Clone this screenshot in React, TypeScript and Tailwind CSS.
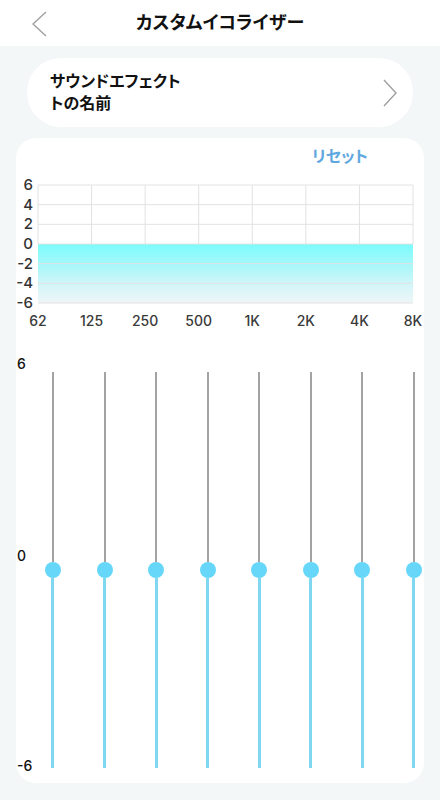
import React from "react";

const bands = ["62", "125", "250", "500", "1K", "2K", "4K", "8K"];
const levels = ["6", "4", "2", "0", "-2", "-4", "-6"];

const jp = "[font-family:'Liberation_Sans','Noto_Sans_CJK_JP',sans-serif] [font-feature-settings:'palt']";
const num = "[font-family:Inter,'Liberation_Sans',sans-serif]";

function EqChart() {
  const w = 375;
  const h = 118;
  const colW = w / 7;
  const rowH = h / 6;
  return (
    <svg width={w} height={h} viewBox={`0 0 ${w} ${h}`} className="block overflow-visible">
      <defs>
        <linearGradient id="eqFill" x1="0" y1="0" x2="0" y2="1">
          <stop offset="0%" stopColor="#7cfbfc" />
          <stop offset="30%" stopColor="#9ff8fa" />
          <stop offset="70%" stopColor="#d4f5f8" />
          <stop offset="100%" stopColor="#eef6f8" />
        </linearGradient>
      </defs>
      <rect x={0} y={h / 2} width={w} height={h / 2} fill="url(#eqFill)" />
      {Array.from({ length: 7 }).map((_, i) => (
        <line key={`h_${i}`} x1={0} x2={w} y1={i * rowH} y2={i * rowH} stroke="#e2e2e2" strokeWidth={1} />
      ))}
      {Array.from({ length: 8 }).map((_, i) => (
        <line key={`v_${i}`} x1={i * colW} x2={i * colW} y1={0} y2={h / 2} stroke="#e2e2e2" strokeWidth={1} />
      ))}
    </svg>
  );
}

function BandSlider() {
  return (
    <div className="w-[51.57px] flex flex-col items-center shrink-0">
      <div className="w-[2px] h-[190px] bg-[#a3a3a3]" />
      <div className="w-[16px] h-[16px] rounded-full bg-[#66d7f8]" />
      <div className="w-[3px] h-[190px] bg-[#80d8f0]" />
    </div>
  );
}

export default function App() {
  return (
    <div className={`w-[440px] h-[800px] bg-[#f3f7f8] overflow-hidden ${jp}`}>
      <header className="h-[46px] bg-white grid grid-cols-[60px_1fr_60px] items-center">
        <svg width="60" height="46" viewBox="0 0 60 46" className="block">
          <polyline points="46,12 33,24 46,36" fill="none" stroke="#a0a0a0" strokeWidth="1.4" />
        </svg>
        <h1 className="text-center text-[18px] font-bold text-[#111] leading-none">
          カスタムイコライザー
        </h1>
        <div />
      </header>

      <div className="mx-[27px] mt-[12px] h-[69px] rounded-[34px] bg-white flex items-center justify-between pl-[23px] pr-[16px]">
        <p className="text-[16px] font-bold leading-[22px] text-[#111]">
          サウンドエフェクト
          <br />
          トの名前
        </p>
        <svg width="14" height="28" viewBox="0 0 14 28" className="block">
          <polyline points="1,1 13,14 1,27" fill="none" stroke="#a0a0a0" strokeWidth="1.4" />
        </svg>
      </div>

      <section className="mx-4 mt-[11px] h-[645px] rounded-[20px] bg-white">
        <div className="flex justify-end pr-[56px] pt-[9px]">
          <button className="text-[16px] font-bold leading-[20px] text-[#62a8e0]">リセット</button>
        </div>

        <div className="flex mt-[8px]">
          <div className={`w-[22px] flex flex-col ${num}`}>
            {levels.map((l) => (
              <span key={l} className="h-[19.67px] text-right pr-[5px] text-[15px] leading-[19.67px] text-[#333] font-medium">
                {l}
              </span>
            ))}
          </div>
          <div className="mt-[10px]">
            <EqChart />
          </div>
        </div>

        <div className={`flex ml-[-4.8px] mt-[-2px] ${num}`}>
          {bands.map((b) => (
            <span key={b} className="w-[53.57px] shrink-0 text-center text-[14px] leading-[20px] text-[#3a3a3a] font-medium">
              {b}
            </span>
          ))}
        </div>

        <div className="flex mt-[23px]">
          <div className={`w-[11.2px] shrink-0 flex flex-col pl-[1px] text-[14px] leading-[20px] text-[#111] font-medium whitespace-nowrap ${num}`}>
            <span>6</span>
            <span className="mt-[172px]">0</span>
            <span className="mt-[190px]">-6</span>
          </div>
          <div className="flex pt-[18px]">
            {bands.map((b) => (
              <BandSlider key={`s_${b}`} />
            ))}
          </div>
        </div>
      </section>
    </div>
  );
}
